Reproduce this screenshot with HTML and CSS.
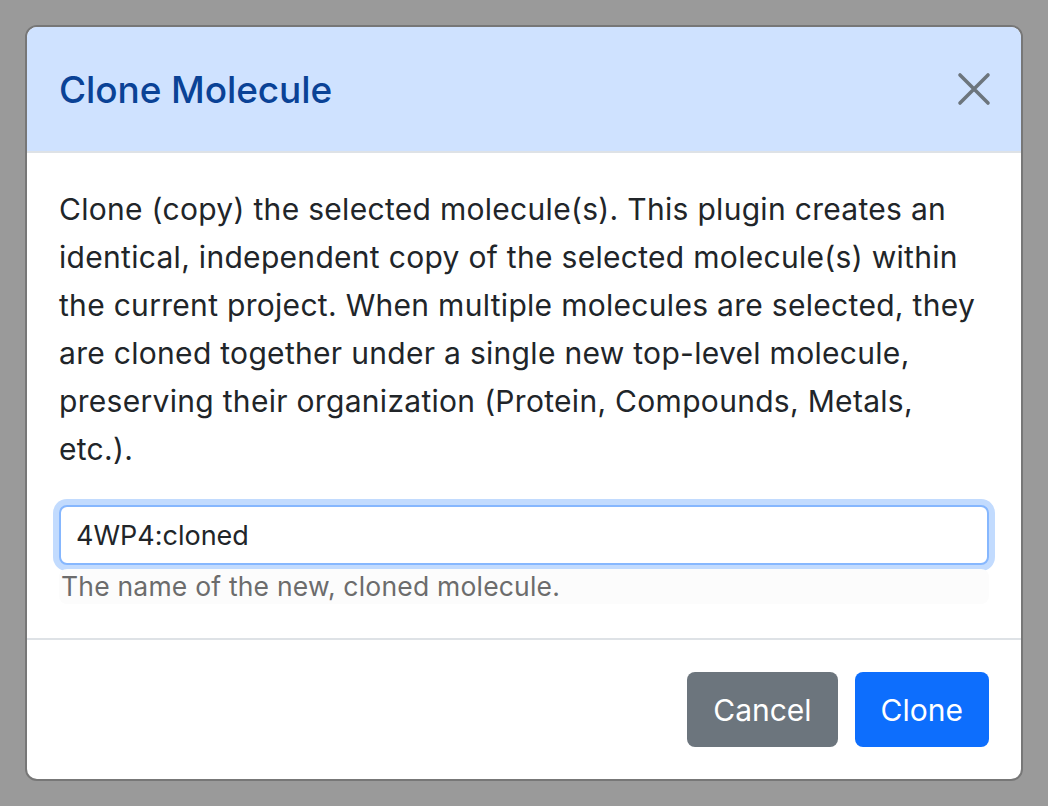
FILE: index.html
```html
<!DOCTYPE html>
<html lang="en">
<head>
    <meta charset="UTF-8">
    <meta name="viewport" content="width=device-width, initial-scale=1.0">
    <title>Clone Molecule</title>
    <link rel="stylesheet" href="styles.css">
</head>
<body>
    <div class="modal">
        <div class="modal-header">
            <h5 class="modal-title">Clone Molecule</h5>
            <button class="btn-close" aria-label="Close">
                <svg width="34" height="34" viewBox="0 0 34 34">
                    <path d="M3 3 L31 31 M31 3 L3 31" stroke="#6c757d" stroke-width="3.6" stroke-linecap="round"/>
                </svg>
            </button>
        </div>
        <div class="modal-body">
            <p>Clone (copy) the selected molecule(s). This plugin creates an identical, independent copy of the selected molecule(s) within the current project. When multiple molecules are selected, they are cloned together under a single new top-level molecule, preserving their organization (Protein, Compounds, Metals, etc.).</p>
            <input type="text" class="form-control" value="4WP4:cloned">
            <div class="form-text">The name of the new, cloned molecule.</div>
        </div>
        <div class="modal-footer">
            <button class="btn btn-secondary">Cancel</button>
            <button class="btn btn-primary">Clone</button>
        </div>
    </div>
</body>
</html>
```

FILE: styles.css
```css
body {
    margin: 0;
    padding: 25px;
    background-color: #9a9a9a;
    font-family: Inter, "Noto Sans", sans-serif;
    color: #212529;
    height: 806px;
    box-sizing: border-box;
    overflow: hidden;
}
.modal {
    width: 994px;
    background-color: white;
    border: 2px solid #777;
    border-radius: 12px;
    overflow: hidden;
}
.modal-header {
    display: flex;
    align-items: center;
    justify-content: space-between;
    height: 124px;
    padding: 0 32px 0 32px;
    background-color: #cfe2ff;
    border-bottom: 2px solid #dee2e6;
    box-sizing: content-box;
}
.modal-title {
    margin: 0;
    font-size: 37px;
    font-weight: 500;
    color: #0a4296;
    letter-spacing: -0.1px;
}
.btn-close {
    border: none;
    background: none;
    padding: 0;
    margin-right: -2px;
    display: flex;
    cursor: pointer;
}
.modal-body {
    padding: 32px 32px 34px 32px;
}
.modal-body p {
    margin: 0 0 32px 0;
    font-size: 30px;
    line-height: 48px;
    letter-spacing: 0.3px;
}
.form-control {
    display: block;
    width: 100%;
    box-sizing: border-box;
    height: 60px;
    padding: 0 15px;
    font-family: inherit;
    font-size: 27px;
    color: #212529;
    border: 2px solid #86b7fe;
    border-radius: 8px;
    outline: none;
    box-shadow: 0 0 0 6px #c2dbfe;
}
.form-text {
    margin-top: 4px;
    padding: 0 2px;
    height: 35px;
    font-size: 26.5px;
    line-height: 34px;
    letter-spacing: 0.2px;
    color: #6c6c6c;
    background-color: #fcfcfc;
    border-radius: 8px;
}
.modal-footer {
    display: flex;
    justify-content: flex-end;
    gap: 17px;
    padding: 32px 32px 32px 32px;
    border-top: 2px solid #dee2e6;
}
.btn {
    height: 75px;
    padding: 0 26px;
    border: none;
    border-radius: 8px;
    color: white;
    font-family: inherit;
    font-size: 30px;
    cursor: pointer;
}
.btn-secondary {
    background-color: #6c757d;
}
.btn-primary {
    background-color: #0d6efd;
}
```
